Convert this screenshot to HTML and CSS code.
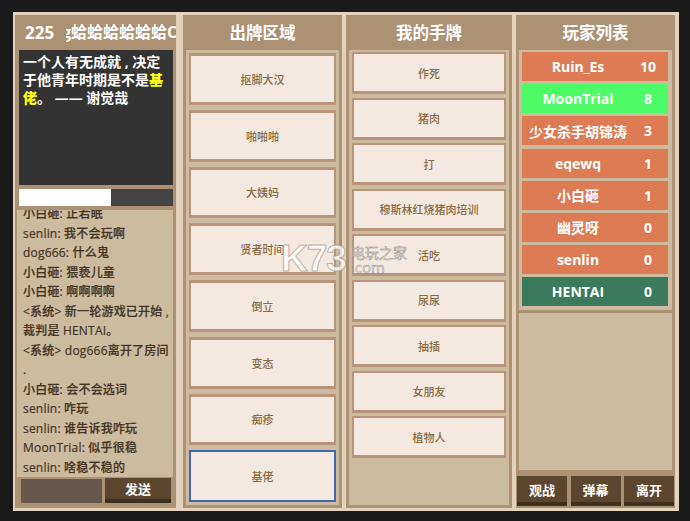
FILE: index.html
```html
<!DOCTYPE html>
<html lang="en">
<head>
    <meta charset="UTF-8">
    <meta name="viewport" content="width=device-width, initial-scale=1.0">
    <title>基佬大作战</title>
    <link rel="stylesheet" href="styles.css">
</head>
<body>
    <div class="app">
        <!-- Room / question / chat -->
        <div class="panel room">
            <div class="room-head">
                <span class="room-id">225</span>
                <span class="room-name"><span class="room-name-text">g蛤蛤蛤蛤蛤蛤C</span></span>
            </div>
            <div class="screen">一个人有无成就 , 决定<br>于他青年时期是不是<b class="hl">基<br>佬</b>。 —— 谢觉哉</div>
            <div class="timer"><div class="timer-fill"></div></div>
            <div class="chat">
                <div>小白砸: 正若眠</div>
                <div>senlin: 我不会玩啊</div>
                <div>dog666: 什么鬼</div>
                <div>小白砸: 猥亵儿童</div>
                <div>小白砸: 啊啊啊啊</div>
                <div>&lt;系统&gt; 新一轮游戏已开始 ,</div>
                <div>裁判是 HENTAI。</div>
                <div>&lt;系统&gt; dog666离开了房间</div>
                <div>.</div>
                <div>小白砸: 会不会选词</div>
                <div>senlin: 咋玩</div>
                <div>senlin: 谁告诉我咋玩</div>
                <div>MoonTrial: 似乎很稳</div>
                <div>senlin: 啥稳不稳的</div>
            </div>
            <div class="send-row">
                <input class="send-input" type="text">
                <button class="btn send-btn">发送</button>
            </div>
        </div>

        <!-- Played cards -->
        <div class="panel played-panel">
            <div class="head">出牌区域</div>
            <div class="played">
                <div class="card">抠脚大汉</div>
                <div class="card">啪啪啪</div>
                <div class="card">大姨妈</div>
                <div class="card">贤者时间</div>
                <div class="card">倒立</div>
                <div class="card">变态</div>
                <div class="card">痴疹</div>
                <div class="card selected">基佬</div>
            </div>
        </div>

        <!-- Hand -->
        <div class="panel hand-panel">
            <div class="head">我的手牌</div>
            <div class="hand">
                <div class="card">作死</div>
                <div class="card">猪肉</div>
                <div class="card">打</div>
                <div class="card">穆斯林红烧猪肉培训</div>
                <div class="card">活吃</div>
                <div class="card">尿尿</div>
                <div class="card">抽插</div>
                <div class="card">女朋友</div>
                <div class="card">植物人</div>
            </div>
        </div>

        <!-- Players -->
        <div class="panel players-panel">
            <div class="head">玩家列表</div>
            <div class="players">
                <div class="player"><span>Ruin_Es</span><span class="score">10</span></div>
                <div class="player active"><span>MoonTrial</span><span class="score">8</span></div>
                <div class="player"><span>少女杀手胡锦涛</span><span class="score">3</span></div>
                <div class="player"><span>eqewq</span><span class="score">1</span></div>
                <div class="player"><span>小白砸</span><span class="score">1</span></div>
                <div class="player"><span>幽灵呀</span><span class="score">0</span></div>
                <div class="player"><span>senlin</span><span class="score">0</span></div>
                <div class="player judge"><span>HENTAI</span><span class="score">0</span></div>
            </div>
            <div class="players-empty"></div>
            <div class="actions">
                <button class="btn">观战</button>
                <button class="btn">弹幕</button>
                <button class="btn">离开</button>
            </div>
        </div>

        <!-- Site watermark over the page -->
        <div class="watermark">
            <span class="wm-logo">K73</span>
            <span class="wm-site">电玩之家<br><span class="wm-com">.com</span></span>
        </div>
    </div>
</body>
</html>
```

FILE: styles.css
```css
* {
    box-sizing: border-box;
}
body {
    margin: 0;
    height: 521px;
    overflow: hidden;
    padding: 12px 11px 10px 13px;
    background: #1a1a1a;
    font-family: "Open Sans", "Noto Sans CJK SC", sans-serif;
}
.app {
    position: relative;
    height: 499px;
    padding: 3px 4px 3px 2px;
    display: flex;
    background: #e3d3bc;
}
.panel {
    display: flex;
    flex-direction: column;
    flex: none;
    min-height: 0;
    background: #ad9174;
}
.room {
    width: 161px;
    margin-right: 7px;
}
.played-panel {
    width: 159px;
    margin-right: 4px;
}
.hand-panel {
    width: 166px;
    margin-right: 4px;
}
.players-panel {
    width: 159px;
}
.head {
    height: 35px;
    line-height: 35px;
    text-align: center;
    font-size: 16.5px;
    font-weight: bold;
    color: #fff;
}

/* left column */
.room-head {
    height: 35px;
    line-height: 35px;
    display: flex;
    font-size: 16px;
    font-weight: bold;
    color: #fff;
    padding-left: 10px;
}
.room-id {
    width: 41px;
    font-size: 17px;
}
.room-name {
    flex: 1;
    overflow: hidden;
    white-space: nowrap;
}
.room-name-text {
    margin-left: -4px;
}
.screen {
    height: 135px;
    margin: 0 3px 0 4px;
    padding: 3px 4px;
    background: #333;
    color: #fff;
    font-size: 14px;
    font-weight: bold;
    line-height: 18px;
    white-space: nowrap;
}
.hl {
    color: #ff0;
}
.timer {
    height: 17px;
    margin: 4px 3px 0 4px;
    background: #444;
}
.timer-fill {
    width: 60%;
    height: 100%;
    background: #fff;
}
.chat {
    flex: 1;
    min-height: 0;
    margin: 4px 3px 0 2px;
    padding: 0 6px 0 6px;
    overflow: hidden;
    display: flex;
    flex-direction: column;
    justify-content: flex-end;
    background: #cdbba0;
    color: #443424;
    font-size: 12px;
    font-weight: 500;
    -webkit-text-stroke: 0.2px #443424;
    letter-spacing: 0.2px;
    line-height: 19.5px;
    white-space: nowrap;
}
.chat div {
    flex: none;
}
.send-row {
    height: 31px;
    display: flex;
    align-items: flex-start;
    gap: 3px;
    padding: 1px 5px 0 6px;
}
.send-input {
    width: 81px;
    height: 24px;
    margin-top: 1px;
    border: none;
    background: #66594c;
}
.btn {
    border: none;
    border-bottom: 4px solid #3f2f1e;
    padding: 0;
    background: #5c4630;
    color: #fff;
    font-family: inherit;
    font-size: 13px;
    font-weight: bold;
}
.send-btn {
    width: 66px;
    height: 25px;
}

/* cards */
.played {
    flex: 1;
    min-height: 0;
    display: grid;
    grid-auto-rows: 1fr;
    row-gap: 5px;
    margin: 0 3px 3px;
    padding: 3px;
    background: #cdbba0;
}
.hand {
    flex: 1;
    display: flex;
    flex-direction: column;
    gap: 3.5px;
    margin: 0 3px 3px;
    padding: 2px 3px 0;
    background: #cdbba0;
}
.card {
    display: flex;
    align-items: center;
    justify-content: center;
    background: #f4e9e1;
    border: 3px solid #b8957a;
    border-left-width: 2px;
    border-right-width: 2px;
    color: #8a6a42;
    font-size: 11px;
    font-weight: 500;
}
.hand .card {
    height: 42px;
    flex: none;
    border-width: 2px;
    border-bottom-width: 3px;
}
.card.selected {
    border: 2px solid #3f68b0;
}

/* players */
.players {
    display: flex;
    flex-direction: column;
    gap: 3.2px;
    margin: 0 3px;
    padding: 2px 4px 4px 3px;
    background: #cdbba0;
    border-bottom: 3px solid #ad9174;
}
.player {
    height: 29px;
    flex: none;
    display: grid;
    grid-template-columns: 112px 28px;
    align-items: center;
    text-align: center;
    background: #dd7b55;
    color: #fff;
    font-size: 14px;
    font-weight: bold;
    white-space: nowrap;
}
.player.active {
    background: #4dfb66;
}
.player.judge {
    background: #3c7a5d;
}
.players-empty {
    flex: 1;
    margin: 0 3px 6px;
    background: #cdbba0;
}
.actions {
    display: grid;
    grid-template-columns: 50px 50px 50px;
    column-gap: 3.5px;
    padding: 0 1px;
    margin-bottom: 2px;
}
.actions .btn {
    height: 30px;
}

/* watermark */
.watermark {
    position: absolute;
    left: 268px;
    top: 231px;
    display: flex;
    gap: 5px;
    pointer-events: none;
}
.wm-logo {
    font-family: "Liberation Sans", sans-serif;
    font-size: 37px;
    font-weight: bold;
    letter-spacing: -1px;
    line-height: 32px;
    color: rgba(255, 255, 255, 0.75);
    -webkit-text-stroke: 1px rgba(170, 160, 150, 0.8);
}
.wm-site {
    font-size: 14px;
    line-height: 15px;
    padding-top: 2px;
    color: rgba(255, 255, 255, 0.55);
    -webkit-text-stroke: 0.5px rgba(130, 125, 120, 0.9);
}
.wm-com {
    font-size: 15px;
}
```
